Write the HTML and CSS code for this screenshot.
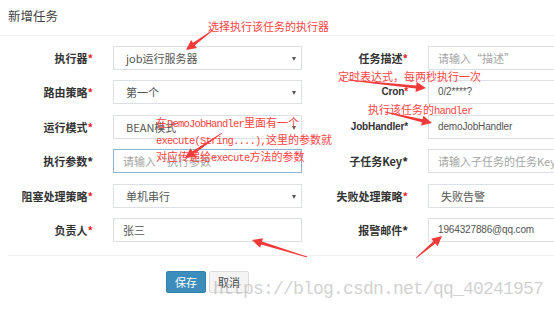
FILE: index.html
```html
<!DOCTYPE html>
<html lang="zh-CN">
<head>
  <meta charset="UTF-8">
  <title>新增任务</title>
  <link rel="stylesheet" href="styles.css">
</head>
<body>
<div class="modal">
  <div class="modal-header"><h4>新增任务</h4></div>

  <form class="modal-body">
    <div class="grid">
      <label>执行器<i>*</i></label>
      <div class="field select">job运行服务器<span class="caret"></span></div>
      <label>任务描述<i>*</i></label>
      <div class="field ph">请输入“描述”</div>

      <label>路由策略<i>*</i></label>
      <div class="field select">第一个<span class="caret"></span></div>
      <label class="latin">Cron<i>*</i></label>
      <div class="field latin">0/2****?</div>

      <label>运行模式<i>*</i></label>
      <div class="field select">BEAN模式<span class="caret"></span></div>
      <label class="latin">JobHandler<b>*</b></label>
      <div class="field latin">demoJobHandler</div>

      <label>执行参数<b>*</b></label>
      <div class="field ph focus">请输入“执行参数”</div>
      <label>子任务Key<b>*</b></label>
      <div class="field ph">请输入子任务的任务Key,如存在多个则逗号分隔</div>

      <label>阻塞处理策略<i>*</i></label>
      <div class="field select">单机串行<span class="caret"></span></div>
      <label>失败处理策略<i>*</i></label>
      <div class="field select">失败告警<span class="caret"></span></div>

      <label>负责人<i>*</i></label>
      <div class="field">张三</div>
      <label>报警邮件<b>*</b></label>
      <div class="field latin">1964327886@qq.com</div>
    </div>

    <div class="modal-footer">
      <button type="button" class="btn btn-primary">保存</button>
      <button type="button" class="btn">取消</button>
    </div>
  </form>

  <!-- annotations drawn on top of the screenshot -->
  <div class="notes">
    <svg class="arrows" width="554" height="311" viewBox="0 0 554 311">
      <polygon points="212.76,29.68 193.11,42.84 191.02,40.03 186,50 196.98,48.07 194.89,45.26 213.24,30.32"/>
      <polygon points="347.96,80.4 415.9,88.47 415.54,91.96 426,88 416.56,82 416.2,85.49 348.04,79.6"/>
      <polygon points="384.91,112.39 421.92,122.18 421.12,125.59 432,123 423.4,115.85 422.6,119.26 385.09,111.61"/>
      <polygon points="221.78,132.67 192.45,151.16 190.49,148.26 185,158 196.09,156.55 194.13,153.64 222.22,133.33"/>
      <polygon points="307.12,256.62 261.99,241.52 263.03,238.18 252,240 260.08,247.73 261.11,244.38 306.88,257.38"/>
      <polygon points="416.26,258.31 435.34,243.6 437.6,246.28 442,236 431.14,238.65 433.4,241.32 415.74,257.69"/>
    </svg>
    <p class="note n1">选择执行该任务的执行器</p>
    <p class="note n2">定时表达式，每两秒执行一次</p>
    <p class="note n3">执行该任务的<span class="en">handler</span></p>
    <p class="note n4">在<span class="en">DemoJobHandler</span>里面有一个<br><span class="en">execute(String....),</span>这里的参数就<br>对应传递给<span class="en">execute</span>方法的参数</p>
    <p class="mark">https://blog.csdn.net/qq_40241957</p>
  </div>
</div>
</body>
</html>
```

FILE: styles.css
```css
html, body {margin:0; background:#fff; overflow:hidden;}
body {font-family:"Noto Sans CJK SC", sans-serif; font-size:11px; color:#333;}

.modal {position:relative; width:554px; height:311px; overflow:hidden;}

.modal-header {height:36px; box-sizing:border-box; padding:7px 8px 0; border-bottom:1px solid #f0f0f0;}
.modal-header h4 {margin:0; font-size:12.5px; font-weight:normal; line-height:18px; color:#444;}

.modal-body {margin:0; padding-top:10px;}

.grid {
  display:grid;
  grid-template-columns:113px 189px 126px 189px;
  grid-auto-rows:24px; row-gap:10.4px;
}
.grid label {
  text-align:right; padding-right:20px; line-height:24px;
  font-weight:bold; color:#333; white-space:nowrap;
}
.grid label i {font-style:normal; color:#e22;}
.grid label b {color:#333;}

.field {
  position:relative; box-sizing:border-box; height:24px;
  border:1px solid #dcdfe4; padding:0 9px; line-height:22px;
  color:#555; white-space:nowrap; overflow:hidden;
}
.field.select {padding-left:12px;}
.field.ph {color:#a5a5a5;}
.field.focus {border-color:#8fb3d1;}
.grid .latin {font-family:"Liberation Sans", sans-serif; font-size:10px; letter-spacing:-0.15px;}
.caret {
  position:absolute; right:5px; top:10px; width:0; height:0;
  border-left:2.5px solid transparent; border-right:2.5px solid transparent;
  border-top:4px solid #555;
}

.modal-footer {margin:13px 0 0 8px; border-top:1px solid #f0f0f0; padding:15px 0 0 158px; display:flex; gap:3px;}
.btn {
  height:22px; padding:0 8px; font-family:inherit; font-size:11px;
  border:1px solid #ddd; border-radius:2px; background:#f4f4f4; color:#444;
}
.btn-primary {background:#3c8dbc; border-color:#367fa9; color:#fff;}

.notes {position:absolute; left:0; top:0; width:554px; height:311px; pointer-events:none;}
.arrows {position:absolute; left:0; top:0;}
.arrows polygon {fill:#f03a3a;}
.note {position:absolute; margin:0; color:#f44; font-size:11px; line-height:15px; white-space:nowrap;}
.note .en {font-family:"Liberation Mono", monospace; font-size:10.5px; letter-spacing:-0.8px;}
.n1 {left:208px; top:19px;}
.n2 {left:338px; top:69px;}
.n3 {left:368px; top:102px;}
.n4 {left:156px; top:115px;}
.mark {
  position:absolute; margin:0; left:213px; top:279px;
  font-family:"Liberation Mono", monospace; font-size:18px; letter-spacing:-0.8px;
  color:rgba(170,170,170,.55); white-space:nowrap;
}
```
